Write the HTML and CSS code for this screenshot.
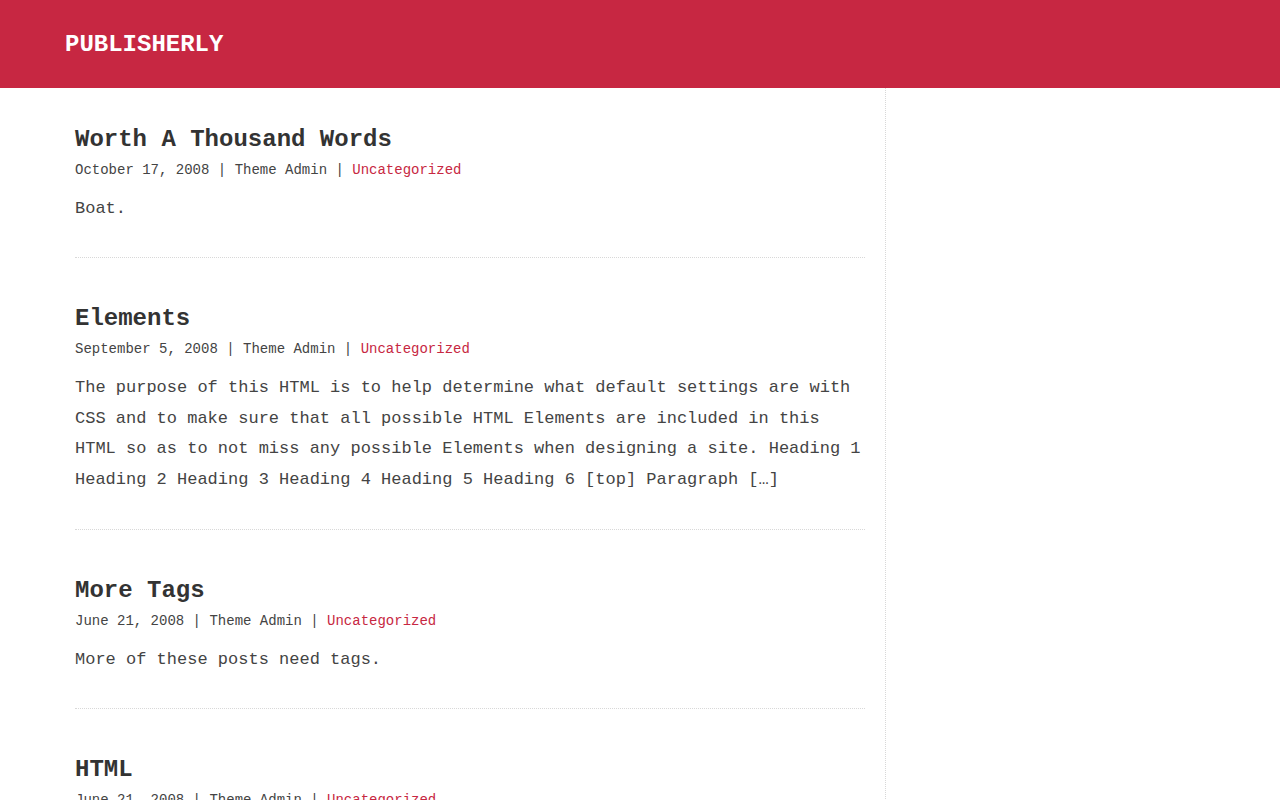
FILE: index.html
```html
<!DOCTYPE html>
<html lang="en">
<head>
<meta charset="utf-8">
<title>Publisherly</title>
<link rel="stylesheet" href="styles.css">
</head>
<body>
<header class="site-header">
  <div class="container">
    <a class="site-title" href="#">PUBLISHERLY</a>
  </div>
</header>
<div class="container layout">
  <main class="content">
    <article class="post">
      <h2 class="post-title">Worth A Thousand Words</h2>
      <div class="post-meta">October 17, 2008 | Theme Admin | <a href="#">Uncategorized</a></div>
      <p class="post-excerpt">Boat.</p>
    </article>
    <article class="post">
      <h2 class="post-title">Elements</h2>
      <div class="post-meta">September 5, 2008 | Theme Admin | <a href="#">Uncategorized</a></div>
      <p class="post-excerpt">The purpose of this HTML is to help determine what default settings are with CSS and to make sure that all possible HTML Elements are included in this HTML so as to not miss any possible Elements when designing a site. Heading 1 Heading 2 Heading 3 Heading 4 Heading 5 Heading 6 [top] Paragraph […]</p>
    </article>
    <article class="post">
      <h2 class="post-title">More Tags</h2>
      <div class="post-meta">June 21, 2008 | Theme Admin | <a href="#">Uncategorized</a></div>
      <p class="post-excerpt">More of these posts need tags.</p>
    </article>
    <article class="post">
      <h2 class="post-title">HTML</h2>
      <div class="post-meta">June 21, 2008 | Theme Admin | <a href="#">Uncategorized</a></div>
      <p class="post-excerpt">Sample HTML post content.</p>
    </article>
  </main>
  <aside class="sidebar"></aside>
</div>
</body>
</html>
```

FILE: styles.css
```css
* { box-sizing: border-box; }
html, body { margin: 0; padding: 0; }
body {
  font-family: "Liberation Mono", "Courier New", monospace;
  color: #444;
  background: #fff;
}
a { text-decoration: none; }
.container {
  width: 1150px;
  margin: 0 auto;
}
.site-header {
  background: #c72742;
  height: 88px;
}
.site-header .container {
  height: 100%;
  display: flex;
  align-items: center;
  padding-top: 2px;
}
.site-title {
  color: #fff;
  font-size: 24px;
  font-weight: bold;
  line-height: 1;
}
.layout {
  display: flex;
}
.content {
  width: 821px;
  padding: 36.7px 20px 0 10px;
  border-right: 1px dotted #d8d8d8;
  min-height: 712px;
}
.sidebar {
  flex: 1;
}
.post {
  padding-bottom: 33px;
  border-bottom: 1px dotted #d8d8d8;
  margin-bottom: 46px;
}
.post-title {
  margin: 0;
  font-size: 24px;
  line-height: 29px;
  font-weight: bold;
  color: #333;
}
.post-meta {
  margin-top: 6px;
  font-size: 14px;
  line-height: 21px;
  color: #444;
}
.post-meta a { color: #c72742; }
.post-excerpt {
  margin: 13px 0 0;
  font-size: 17px;
  line-height: 30.6px;
  color: #444;
}
```
